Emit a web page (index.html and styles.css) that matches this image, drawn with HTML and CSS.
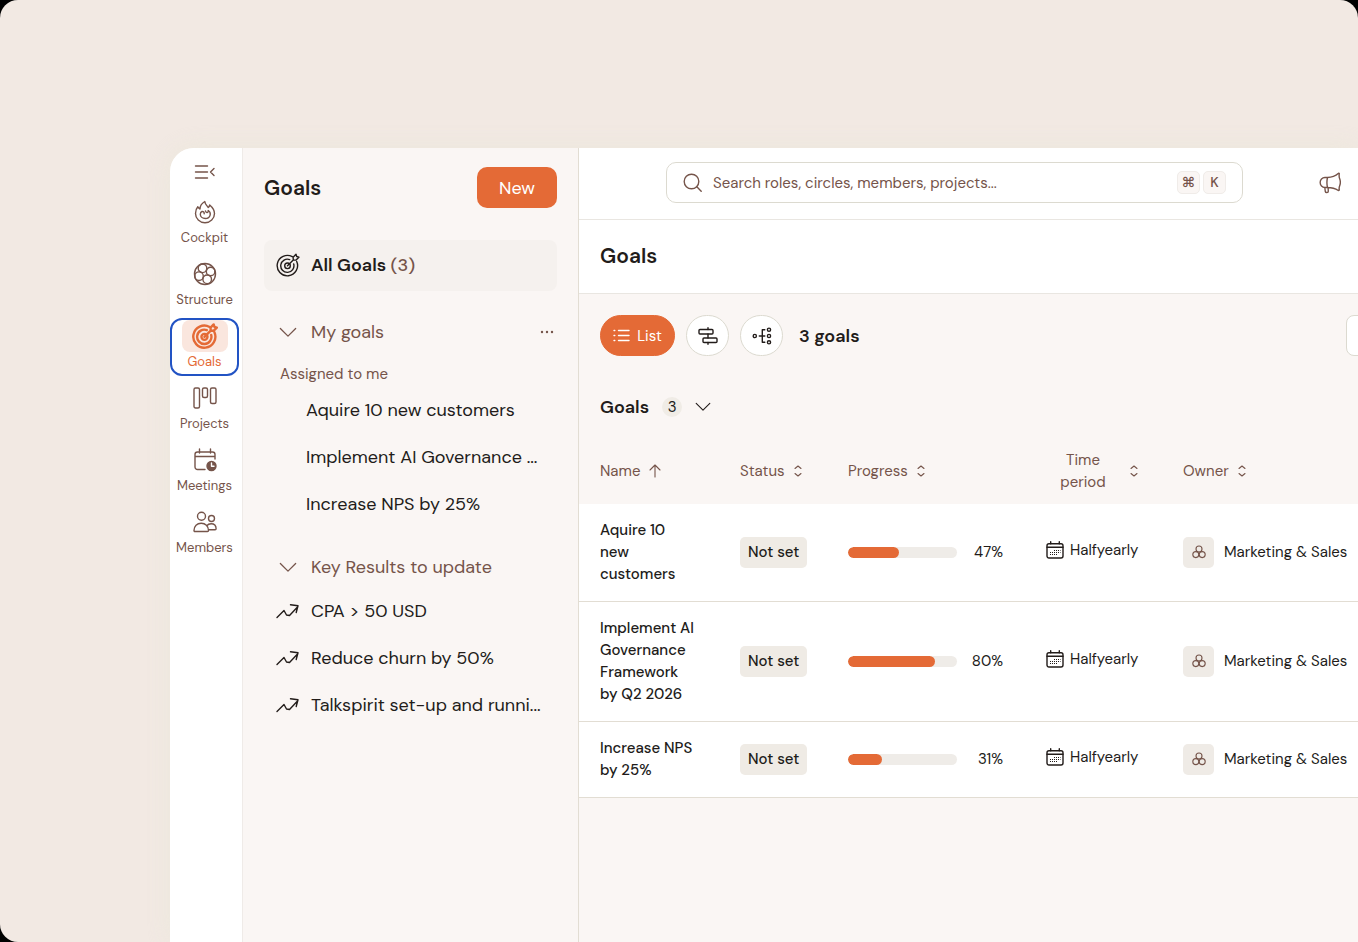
FILE: index.html
```
<!DOCTYPE html>
<html lang="en">
<head>
    <meta charset="UTF-8">
    <meta name="viewport" content="width=device-width, initial-scale=1.0">
    <title>Goals</title>
    <link rel="stylesheet" href="styles.css">
</head>
<body>
<!-- shared icons -->
<svg class="sprite" aria-hidden="true">
    <symbol id="chevron" viewBox="0 0 20 12"><path d="M1.500 1.500 10 10l8.500-8.500"/></symbol>
    <symbol id="sort" viewBox="0 0 8 12"><path d="M1 3.500l3-2.500 3 2.500M1 8.500l3 2.500 3-2.500"/></symbol>
    <symbol id="trend" viewBox="0 0 24 16"><path d="M1 14.500 8 7.500l2.500 4.500 3 .5L21.500 4M14.500 1.800l7.500 1-1.800 6.700"/></symbol>
    <symbol id="calendar" viewBox="0 0 18 18"><rect x="1" y="2.800" width="16" height="14.200" rx="2"/><path d="M1 6.200h16M4.700.7v2M13.300.7v2"/><path class="dots" d="M8 9.500h6.500M4 11.500h10.500M4 13.500h7"/></symbol>
    <symbol id="circles" viewBox="0 0 14 14"><circle cx="7" cy="4" r="3"/><circle cx="3.800" cy="9.600" r="3"/><circle cx="10.200" cy="9.600" r="3"/></symbol>
    <symbol id="target" viewBox="0 0 24 24"><path d="M16.300 3.700A10.200 10.200 0 1 0 20.700 8.500M13.700 6.600A6.600 6.600 0 1 0 17.700 11"/><circle cx="11.500" cy="12.800" r="2.800"/><path d="M11.500 12.800l6-6M17.300 7l-.2-2.800L20 1.300l.7 2.200 2.200.7-2.800 2.900z"/></symbol>
</svg>

<div class="canvas">
    <div class="app">
        <nav class="rail">
            <button class="rail-toggle" aria-label="Collapse menu">
                <svg class="icon" width="22" height="14" viewBox="0 0 22 14"><path d="M1.500 1h12M1.500 7h12M1.500 13h12M20 3.500 16.500 7l3.500 3.500"/></svg>
            </button>
            <a class="rail-item" href="#cockpit">
                <span class="rail-icon"><svg class="icon" width="22" height="24" viewBox="0 0 22 24"><path d="M10.800 1.500c.3 3 2.200 4 3.500 6 .8-.6 1.200-1.500 1.400-2.500 3 2.500 4.800 5.500 4.800 8.500a9.500 9.300 0 0 1-19 0c0-3 1-5.200 2.300-6.700.5 1.200 1.200 1.800 2.200 2.200C6 6 7.500 3.500 10.800 1.500z"/><path d="M11.500 11c.2 1.300 1 1.600 1.700 1.500 1-.2 1.200-1 1-2 1.800 1 2.300 2.500 2 4.300-.5 2.200-2.500 3.700-4.900 3.700-2.800 0-5-1.800-5-4.300 0-1.300.7-2.300 1.700-2.700 1.600-.3 2.300 1 2.200 2.300"/></svg></span>
                <span>Cockpit</span>
            </a>
            <a class="rail-item" href="#structure">
                <span class="rail-icon"><svg class="icon" width="24" height="24" viewBox="0 0 24 24"><circle cx="12" cy="12" r="10.500"/><circle cx="9.500" cy="6.300" r="4.300"/><circle cx="6" cy="14.200" r="4.300"/><circle cx="14.200" cy="17.300" r="4.300"/><circle cx="17.600" cy="9.500" r="4.300"/></svg></span>
                <span>Structure</span>
            </a>
            <a class="rail-item active" href="#goals">
                <span class="rail-icon"><svg class="icon" width="26" height="26"><use href="#target"/></svg></span>
                <span>Goals</span>
            </a>
            <a class="rail-item" href="#projects">
                <span class="rail-icon"><svg class="icon" width="24" height="24" viewBox="0 0 24 24"><rect x="1" y="2" width="5.500" height="20" rx="1.500"/><rect x="9.500" y="2" width="5" height="9.500" rx="1.500"/><rect x="17.500" y="2" width="5.500" height="15.500" rx="1.500"/></svg></span>
                <span>Projects</span>
            </a>
            <a class="rail-item" href="#meetings">
                <span class="rail-icon"><svg class="icon" width="24" height="24" viewBox="0 0 24 24"><path d="M12 21.500H4.500A2.500 2.500 0 0 1 2 19V6.500A2.500 2.500 0 0 1 4.500 4h15A2.500 2.500 0 0 1 22 6.500V11M2 8.500h20M6.500 1v4M17.500 1v4"/><circle class="fill" cx="18.500" cy="18" r="4.500"/><path class="light" d="M18.500 15v3.300h2.500"/></svg></span>
                <span>Meetings</span>
            </a>
            <a class="rail-item" href="#members">
                <span class="rail-icon"><svg class="icon" width="24" height="24" viewBox="0 0 24 24"><circle cx="8.500" cy="6.300" r="4"/><circle cx="18.500" cy="8.500" r="3"/><path d="M1 20.500c0-4.500 3-7.300 7.200-7.300s7.300 2.800 7.300 7.300c0 .6-.3 1-1 1H2c-.7 0-1-.4-1-1zM13.800 15.800c1-1.300 2.500-2 4.300-2 3 0 5 2 5 5 0 .7-.4 1-1 1h-6.700"/></svg></span>
                <span>Members</span>
            </a>
        </nav>

        <aside class="panel">
            <div class="panel-header">
                <h2>Goals</h2>
                <button class="new-btn">New</button>
            </div>
            <a class="all-goals" href="#all">
                <svg class="icon" width="24" height="24"><use href="#target"/></svg>
                <span>All Goals <span class="count">(3)</span></span>
            </a>

            <div class="section-row">
                <button class="section-toggle"><svg class="icon" width="18" height="11"><use href="#chevron"/></svg>My goals</button>
                <button class="more-btn" aria-label="More options"><svg width="14" height="4" viewBox="0 0 14 4"><circle cx="2" cy="2" r="1.200"/><circle cx="7" cy="2" r="1.200"/><circle cx="12" cy="2" r="1.200"/></svg></button>
            </div>
            <h3>Assigned to me</h3>
            <ul class="goal-list">
                <li><a href="#g1">Aquire 10 new customers</a></li>
                <li><a href="#g2">Implement AI Governance ...</a></li>
                <li><a href="#g3">Increase NPS by 25%</a></li>
            </ul>

            <div class="section-row key-results">
                <button class="section-toggle"><svg class="icon" width="18" height="11"><use href="#chevron"/></svg>Key Results to update</button>
            </div>
            <ul class="result-list">
                <li><svg class="icon" width="24" height="16"><use href="#trend"/></svg><a href="#k1">CPA &gt; 50 USD</a></li>
                <li><svg class="icon" width="24" height="16"><use href="#trend"/></svg><a href="#k2">Reduce churn by 50%</a></li>
                <li><svg class="icon" width="24" height="16"><use href="#trend"/></svg><a href="#k3">Talkspirit set-up and runni...</a></li>
            </ul>
        </aside>

        <main class="main">
            <div class="topbar">
                <label class="search">
                    <svg class="icon" width="19" height="19" viewBox="0 0 19 19"><circle cx="8.500" cy="8.500" r="7.300"/><path d="m13.800 13.800 4.400 4.400"/></svg>
                    <input type="text" placeholder="Search roles, circles, members, projects..." aria-label="Search">
                    <kbd>⌘</kbd>
                    <kbd>K</kbd>
                </label>
                <button class="news-btn" aria-label="News">
                    <svg class="icon" width="22" height="22" viewBox="0 0 22 22"><path d="M8.500 5.500c4.500 0 8-1.500 11-4.200l.8.200c-.3 2-.3 3.500.3 5 .8 2 .8 5.500 0 7.500-.5 1.300-.6 2.500-.3 4l-1 .5c-3-2-6.300-3-10.800-3H6A4.700 4.700 0 0 1 1.200 10.500 4.700 4.700 0 0 1 6 5.500zM8.500 5.500c-.7 3-.7 7 0 10M5.800 15.500l.5 4c.3 1.500 3 1.400 3-.2l-.2-3.800"/></svg>
                </button>
            </div>
            <header class="page-title">
                <h1>Goals</h1>
            </header>

            <div class="toolbar">
                <button class="view-btn selected">
                    <svg class="icon" width="17" height="13" viewBox="0 0 17 13"><path d="M5.500 1.500H16M5.500 6.500H16M5.500 11.500H16M1 1.500h.8M1 6.500h.8M1 11.500h.8"/></svg>List
                </button>
                <button class="view-btn" aria-label="Timeline">
                    <svg class="icon" width="20" height="18" viewBox="0 0 20 18"><rect x="1" y="2.500" width="14" height="4.500" rx="1"/><rect x="5" y="11" width="14" height="4.500" rx="1"/><path d="M10 .7v1.800M10 7v4M10 15.500v1.800"/></svg>
                </button>
                <button class="view-btn" aria-label="Tree">
                    <svg class="icon" width="20" height="18" viewBox="0 0 20 18"><circle cx="2.800" cy="9" r="1.600"/><circle cx="17" cy="2.700" r="1.600"/><circle cx="17" cy="9" r="1.600"/><circle cx="17" cy="15.300" r="1.600"/><path d="M7.300 9h5.500M12.800 2.700h-2.500v12.600h2.500"/></svg>
                </button>
                <strong>3 goals</strong>
                <button class="filter-btn" aria-label="Filters"></button>
            </div>

            <div class="group-header">
                <h2>Goals</h2>
                <span class="badge">3</span>
                <button aria-label="Collapse group"><svg class="icon" width="16" height="10"><use href="#chevron"/></svg></button>
            </div>

            <table class="goals-table">
                <colgroup>
                    <col class="col-name">
                    <col class="col-status">
                    <col class="col-progress">
                    <col class="col-period">
                    <col>
                </colgroup>
                <thead>
                <tr>
                    <th><button>Name <svg class="icon sort" width="12" height="14" viewBox="0 0 12 14"><path d="M6 13V1M1 6l5-5 5 5"/></svg></button></th>
                    <th><button>Status <svg class="icon sort" width="8" height="12"><use href="#sort"/></svg></button></th>
                    <th><button>Progress <svg class="icon sort" width="8" height="12"><use href="#sort"/></svg></button></th>
                    <th><button class="period-head"><span>Time period</span> <svg class="icon sort" width="8" height="12"><use href="#sort"/></svg></button></th>
                    <th><button>Owner <svg class="icon sort" width="8" height="12"><use href="#sort"/></svg></button></th>
                </tr>
                </thead>
                <tbody>
                <tr>
                    <td class="name">Aquire 10 new customers</td>
                    <td><span class="status">Not set</span></td>
                    <td><div class="progress"><div class="track"><div class="bar" style="width: 47%"></div></div><span>47%</span></div></td>
                    <td><div class="period"><svg class="icon" width="18" height="18"><use href="#calendar"/></svg>Halfyearly</div></td>
                    <td><div class="owner"><span class="owner-icon"><svg class="icon" width="14" height="14"><use href="#circles"/></svg></span>Marketing &amp; Sales</div></td>
                </tr>
                <tr>
                    <td class="name">Implement AI Governance Framework by Q2 2026</td>
                    <td><span class="status">Not set</span></td>
                    <td><div class="progress"><div class="track"><div class="bar" style="width: 80%"></div></div><span>80%</span></div></td>
                    <td><div class="period"><svg class="icon" width="18" height="18"><use href="#calendar"/></svg>Halfyearly</div></td>
                    <td><div class="owner"><span class="owner-icon"><svg class="icon" width="14" height="14"><use href="#circles"/></svg></span>Marketing &amp; Sales</div></td>
                </tr>
                <tr>
                    <td class="name">Increase NPS by 25%</td>
                    <td><span class="status">Not set</span></td>
                    <td><div class="progress"><div class="track"><div class="bar" style="width: 31%"></div></div><span>31%</span></div></td>
                    <td><div class="period"><svg class="icon" width="18" height="18"><use href="#calendar"/></svg>Halfyearly</div></td>
                    <td><div class="owner"><span class="owner-icon"><svg class="icon" width="14" height="14"><use href="#circles"/></svg></span>Marketing &amp; Sales</div></td>
                </tr>
                </tbody>
            </table>
        </main>
    </div>
</div>
</body>
</html>
```
FILE: styles.css
```
* {
    box-sizing: border-box;
}

body {
    margin: 0;
    background: #000;
    color: #221c1a;
    font-family: "DM Sans", Inter, "Liberation Sans", sans-serif;
    font-size: 15px;
    font-optical-sizing: none;
    line-height: 22px;
}

h1, h2, h3, ul {
    margin: 0;
    padding: 0;
}

ul {
    list-style: none;
}

a {
    color: inherit;
    text-decoration: none;
}

button {
    padding: 0;
    border: none;
    background: none;
    color: inherit;
    font: inherit;
    font-optical-sizing: none;
    cursor: pointer;
}

.sprite {
    display: none;
}

.icon {
    flex: none;
    fill: none;
    stroke: currentColor;
    stroke-width: 1.4;
    stroke-linecap: round;
    stroke-linejoin: round;
}

.canvas {
    display: flex;
    min-height: 100vh;
    padding: 148px 0 0 170px;
    background: #f2e9e3;
    border-radius: 18px 18px 0 18px;
    overflow: hidden;
}

.app {
    display: flex;
    flex: 1;
    min-width: 0;
    background: #faf6f4;
    border-top-left-radius: 24px;
    box-shadow: 0 0 24px rgba(232, 232, 214, 0.6);
    overflow: hidden;
}

/* Left rail */
.rail {
    display: flex;
    flex: none;
    flex-direction: column;
    gap: 4px;
    width: 73px;
    padding-right: 3px;
    background: #fff;
    border-right: 1px solid #efebe8;
    color: #75544a;
}

.rail-toggle {
    display: flex;
    align-items: center;
    justify-content: center;
    height: 42px;
    padding-top: 6px;
}

.rail-item {
    display: flex;
    flex-direction: column;
    align-items: center;
    height: 58px;
    border: 2px solid transparent;
    border-radius: 12px;
    font-size: 13px;
    line-height: 20px;
}

.rail-icon {
    display: flex;
    align-items: center;
    justify-content: center;
    width: 46px;
    height: 32px;
    border-radius: 8px;
}

.rail-item.active {
    border-color: #2253c4;
    color: #e46a36;
}

.rail-item.active .rail-icon {
    background: #fae6de;
}

.rail-item.active .icon {
    stroke-width: 2.2;
}

.icon .fill {
    fill: currentColor;
}

.icon .light {
    stroke: #fff;
}

.dots {
    stroke-width: 1;
    stroke-linecap: butt;
    stroke-dasharray: 1 1;
}

/* Goals panel */
.panel {
    flex: none;
    width: 336px;
    padding: 19px 21px 0;
    border-right: 1px solid #e2ddd3;
}

.panel-header {
    display: flex;
    align-items: center;
    justify-content: space-between;
    margin-bottom: 32px;
}

h1, h2 {
    font-size: 21px;
    font-weight: 600;
    line-height: 26px;
}

.new-btn {
    width: 80px;
    height: 41px;
    border-radius: 10px;
    background: #e46a36;
    color: #fff;
    font-size: 18px;
}

.all-goals {
    display: flex;
    align-items: center;
    gap: 11px;
    height: 51px;
    padding: 0 12px 2px;
    border-radius: 8px;
    background: #f5f1ee;
    font-size: 18px;
    font-weight: 600;
}

.count {
    color: #75544a;
    font-weight: 500;
}

.section-row {
    display: flex;
    align-items: center;
    justify-content: space-between;
    height: 40px;
    margin-top: 21px;
    color: #75544a;
}

.section-row.key-results {
    margin-top: 20px;
}

.section-toggle {
    display: flex;
    align-items: center;
    gap: 14px;
    padding-left: 15px;
    font-size: 18px;
}

.more-btn {
    display: flex;
    padding: 8px 3px;
    fill: #75544a;
}

h3 {
    margin-top: 10px;
    padding-left: 16px;
    color: #75544a;
    font-size: 15px;
    font-weight: 400;
    line-height: 24px;
}

.goal-list li,
.result-list li {
    display: flex;
    align-items: center;
    gap: 11px;
    height: 47px;
    font-size: 18px;
    white-space: nowrap;
}

.goal-list li {
    padding-left: 42px;
}

.result-list li {
    padding-left: 12px;
}

/* Main area */
.main {
    flex: 1;
    min-width: 0;
    overflow: hidden;
}

.topbar {
    display: flex;
    align-items: center;
    gap: 76px;
    height: 72px;
    padding: 0 17px 2px 87px;
    background: #fff;
    border-bottom: 1px solid #e9e6e1;
}

.search {
    display: flex;
    flex: 1;
    align-items: center;
    height: 41px;
    padding: 0 16px;
    border: 1px solid #dcdad0;
    border-radius: 10px;
    color: #75544a;
}

.search input {
    flex: 1;
    min-width: 0;
    margin-left: 11px;
    padding: 0;
    border: none;
    outline: none;
    background: none;
    font: inherit;
    font-optical-sizing: none;
}

.search input::placeholder {
    color: #75544a;
    opacity: 1;
}

kbd {
    width: 23px;
    height: 23px;
    margin-left: 3px;
    border: 1px solid #f0ece9;
    border-radius: 5px;
    background: #faf6f4;
    font-family: inherit;
    font-size: 14px;
    font-weight: 500;
    line-height: 21px;
    text-align: center;
}

.news-btn {
    display: flex;
    color: #75544a;
}

.page-title {
    display: flex;
    align-items: center;
    height: 74px;
    padding: 0 21px 2px;
    background: #fff;
    border-bottom: 1px solid #e9e6e1;
}

.toolbar {
    display: flex;
    align-items: center;
    gap: 11px;
    padding: 21px 0 0 21px;
}

.view-btn {
    display: flex;
    align-items: center;
    justify-content: center;
    gap: 7px;
    width: 43px;
    height: 41px;
    border: 1px solid #dcdad0;
    border-radius: 21px;
    background: #fff;
}

.view-btn.selected {
    width: 75px;
    border-color: #e46a36;
    background: #e46a36;
    color: #fff;
}

.toolbar strong {
    margin-left: 5px;
    font-size: 18px;
    font-weight: 600;
}

/* runs past the right edge of the window */
.filter-btn {
    flex: none;
    width: 40px;
    height: 41px;
    margin-left: auto;
    margin-right: -28px;
    border: 1px solid #dcdad0;
    border-radius: 8px;
    background: #fff;
}

.group-header {
    display: flex;
    align-items: center;
    gap: 13px;
    height: 40px;
    margin: 31px 0 13px;
    padding: 0 21px;
}

.group-header h2 {
    font-size: 18px;
}

.group-header button {
    display: flex;
}

.badge {
    width: 20px;
    height: 20px;
    border-radius: 10px;
    background: #f0ece6;
    line-height: 20px;
    text-align: center;
}

/* Table */
.goals-table {
    width: 100%;
    border-collapse: collapse;
    table-layout: fixed;
}

.col-name {
    width: 161px;
}

.col-status {
    width: 108px;
}

.col-progress {
    width: 198px;
}

.col-period {
    width: 137px;
}

th {
    height: 64px;
    padding: 0 0 2px;
    color: #75544a;
    font-weight: 400;
    text-align: left;
}

th:first-child {
    padding-left: 21px;
}

th button {
    display: flex;
    align-items: center;
    gap: 9px;
}

.sort {
    stroke-width: 1.1;
}

.period-head {
    gap: 20px;
    padding-left: 10px;
}

th .period-head {
    gap: 20px;
}

.period-head span {
    width: 54px;
}

td {
    padding: 15px 0 16px;
    background: #fff;
    border-bottom: 1px solid #e2ddd3;
    white-space: nowrap;
}

td.name {
    padding-left: 21px;
    padding-right: 44px;
    font-weight: 500;
    white-space: normal;
}

.status {
    display: inline-block;
    padding: 0 8px;
    border-radius: 5px;
    background: #efebe5;
    font-weight: 500;
    line-height: 31px;
}

.progress {
    display: flex;
    align-items: center;
    justify-content: space-between;
    width: 155px;
}

.track {
    width: 109px;
    height: 11px;
    border-radius: 6px;
    background: #efece8;
    overflow: hidden;
}

.bar {
    height: 100%;
    border-radius: 6px;
    background: #e46a36;
}

.period {
    display: flex;
    align-items: center;
    gap: 6px;
    padding-bottom: 4px;
}

.owner {
    display: flex;
    align-items: center;
    gap: 10px;
}

.owner-icon {
    display: flex;
    align-items: center;
    justify-content: center;
    width: 31px;
    height: 31px;
    border-radius: 5px;
    background: #efebe6;
    color: #75544a;
}

.owner-icon .icon {
    stroke-width: 1.1;
}
```
